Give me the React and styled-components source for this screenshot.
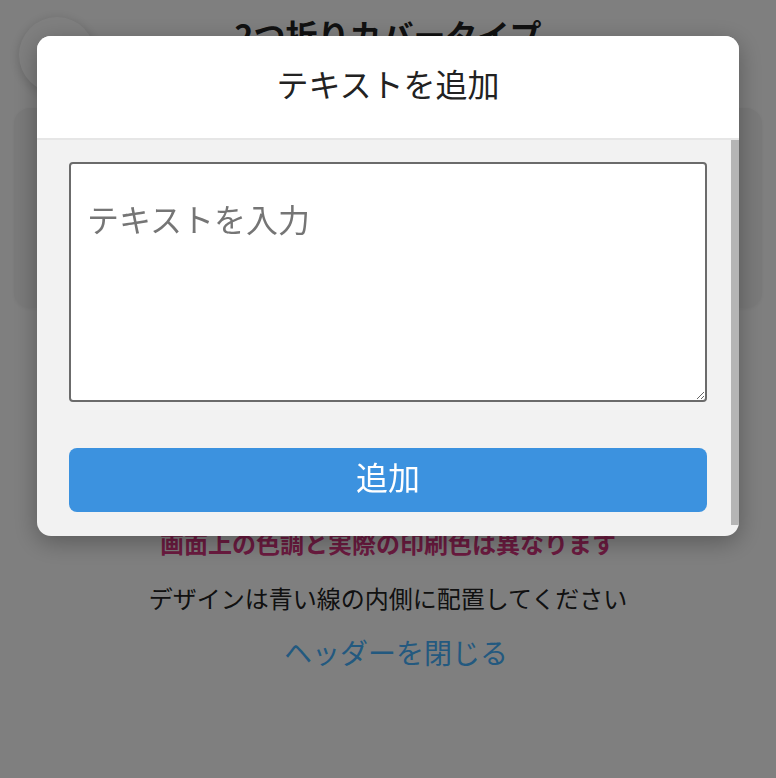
import React, { useState } from 'react'
import styled, { createGlobalStyle } from 'styled-components'

const GlobalStyle = createGlobalStyle`
    html, body {
        margin: 0;
        padding: 0;
        background: #ffffff;
        font-family: "Noto Sans CJK JP", "Noto Sans", sans-serif;
    }
`

const Page = styled.div`
    width: 776px;
    height: 778px;
    padding: 0 14px;
    box-sizing: border-box;
    overflow: hidden;
`

const Header = styled.div`
    display: grid;
    grid-template-columns: 81px 1fr 81px;
    height: 108px;
`

const BackButton = styled.div`
    width: 76px;
    height: 76px;
    margin: 17px 0 0 5px;
    border-radius: 50%;
    background: #ffffff;
    box-shadow: 0 2px 12px rgba(0, 0, 0, 0.18);
`

const PageTitle = styled.h1`
    margin: 0;
    padding-top: 12px;
    line-height: 44px;
    font-size: 32px;
    font-weight: 700;
    color: #222;
    text-align: center;
`

const PreviewCard = styled.div`
    height: 200px;
    border-radius: 16px;
    background: #f4f4f4;
    box-shadow: 0 1px 4px rgba(0, 0, 0, 0.06);
`

const Notes = styled.div`
    display: flex;
    flex-direction: column;
    align-items: center;
    margin-top: 217px;
`

const Warning = styled.p`
    margin: 0;
    font-size: 24px;
    line-height: 36px;
    font-weight: 700;
    color: #d83680;
`

const Hint = styled.p`
    margin: 19px 0 0;
    font-size: 24px;
    line-height: 36px;
    color: #222;
`

const CloseLink = styled.a`
    margin: 16px 0 0 16px;
    font-size: 28px;
    line-height: 40px;
    color: #46b2ff;
    text-decoration: none;
    cursor: pointer;
`

const Backdrop = styled.div`
    position: fixed;
    inset: 0;
    background: rgba(0, 0, 0, 0.5);
`

const Modal = styled.div`
    position: fixed;
    top: 36px;
    left: 37px;
    width: 702px;
    height: 500px;
    display: flex;
    flex-direction: column;
    border-radius: 14px;
    overflow: hidden;
    background: #f2f2f2;
    box-shadow: 0 6px 24px rgba(0, 0, 0, 0.3);
`

const ModalHeader = styled.div`
    flex: 0 0 102px;
    display: flex;
    align-items: center;
    justify-content: center;
    background: #ffffff;
    border-bottom: 2px solid #e6e6e6;
`

const ModalTitle = styled.h2`
    margin: 0 0 8px;
    font-size: 32px;
    font-weight: 400;
    color: #222;
`

const ModalBody = styled.div`
    flex: 1;
    display: flex;
    min-height: 0;
`

const BodyContent = styled.div`
    flex: 1;
    min-width: 0;
    padding: 22px 24px 0 32px;
`

const ScrollTrack = styled.div`
    flex: 0 0 8px;
    display: flex;
    flex-direction: column;
`

const ScrollThumb = styled.div`
    height: 385px;
    background: #b5b5b5;
`

const TextInput = styled.textarea`
    display: block;
    width: 100%;
    height: 240px;
    box-sizing: border-box;
    margin: 0;
    padding: 31px 16px;
    border: 2px solid #6b6b6b;
    border-radius: 4px;
    background: #ffffff;
    font-family: "Noto Sans CJK JP", "Noto Sans", sans-serif;
    font-size: 32px;
    color: #222;
    outline: none;

    &::placeholder {
        color: #757575;
    }
`

const AddButton = styled.button`
    display: block;
    width: 100%;
    height: 64px;
    margin-top: 46px;
    padding: 0 0 9px;
    border: none;
    border-radius: 8px;
    background: #3c92df;
    color: #ffffff;
    font-family: "Noto Sans CJK JP", "Noto Sans", sans-serif;
    font-size: 32px;
    cursor: pointer;
`

const App = function () {
    const [text, setText] = useState('')

    return (
        <>
            <GlobalStyle />
            <Page>
                <Header>
                    <BackButton />
                    <PageTitle>2つ折りカバータイプ</PageTitle>
                </Header>
                <PreviewCard />
                <Notes>
                    <Warning>画面上の色調と実際の印刷色は異なります</Warning>
                    <Hint>デザインは青い線の内側に配置してください</Hint>
                    <CloseLink>ヘッダーを閉じる</CloseLink>
                </Notes>
            </Page>
            <Backdrop />
            <Modal>
                <ModalHeader>
                    <ModalTitle>テキストを追加</ModalTitle>
                </ModalHeader>
                <ModalBody>
                    <BodyContent>
                        <TextInput
                            placeholder="テキストを入力"
                            value={text}
                            onChange={(e) => setText(e.target.value)}
                        />
                        <AddButton>追加</AddButton>
                    </BodyContent>
                    <ScrollTrack>
                        <ScrollThumb />
                    </ScrollTrack>
                </ModalBody>
            </Modal>
        </>
    )
}

export default App
